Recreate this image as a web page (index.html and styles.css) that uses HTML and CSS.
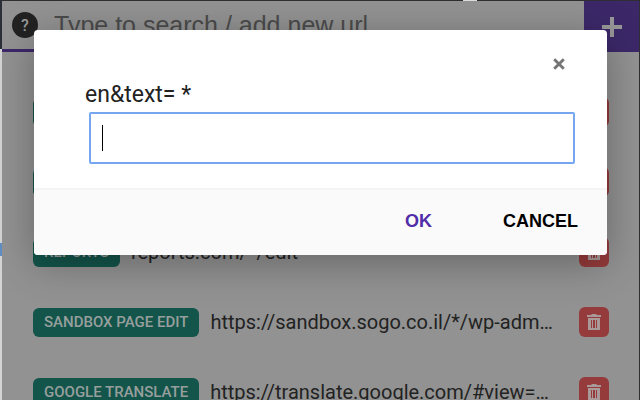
FILE: index.html
```html
<!DOCTYPE html>
<html lang="en">
<head>
<meta charset="utf-8">
<title>Saved urls</title>
<link rel="stylesheet" href="styles.css">
</head>
<body>
<svg class="defs" aria-hidden="true">
  <symbol id="trash" viewBox="0 0 14 18">
    <path fill="currentColor" fill-rule="evenodd" d="M0 2h4l1-1h4l1 1h4v2H0zM1 5h12v12H1zM4 7v8h1V7zM6 7v8h2V7zM9 7v8h1V7z"/>
  </symbol>
</svg>
<div class="edge" aria-hidden="true">
  <i class="edge-dark"></i><i class="edge-light"></i><i class="edge-blue"></i><i class="edge-rest"></i>
</div>
<main class="popup">
  <header class="bar">
    <div class="search">
      <button class="help" aria-label="Help">?</button>
      <input class="query" type="text" aria-label="Search or add url" placeholder="Type to search / add new url">
    </div>
    <button class="add" aria-label="Add">
      <svg class="plus" viewBox="0 0 20 20"><path d="M10 0v20M0 10h20" stroke="currentColor" stroke-width="4"/></svg>
    </button>
  </header>
  <ul class="list">
    <li class="row"><span class="tag"></span><a class="url" href="#"></a><button class="del" aria-label="Delete"><svg class="bin"><use href="#trash"/></svg></button></li>
    <li class="row"><span class="tag"></span><a class="url" href="#"></a><button class="del" aria-label="Delete"><svg class="bin"><use href="#trash"/></svg></button></li>
    <li class="row"><span class="tag">REPORTS</span><a class="url" href="#">reports.com/*/edit</a><button class="del" aria-label="Delete"><svg class="bin"><use href="#trash"/></svg></button></li>
    <li class="row"><span class="tag">SANDBOX PAGE EDIT</span><a class="url" href="#">https://sandbox.sogo.co.il/*/wp-adm…</a><button class="del" aria-label="Delete"><svg class="bin"><use href="#trash"/></svg></button></li>
    <li class="row"><span class="tag">GOOGLE TRANSLATE</span><a class="url" href="#">https://translate.google.com/#view=…</a><button class="del" aria-label="Delete"><svg class="bin"><use href="#trash"/></svg></button></li>
  </ul>
</main>
<form class="dialog" role="dialog">
  <div class="content">
    <button class="close" type="button" aria-label="Close"><svg class="cross" viewBox="0 0 10 10"><path d="M1 1l8 8M9 1l-8 8" stroke="currentColor" stroke-width="2.4"/></svg></button>
    <label class="label" for="value">en&amp;text= *</label>
    <div class="field">
      <input class="value" id="value" type="text">
      <i class="caret"></i>
    </div>
  </div>
  <footer class="actions">
    <button class="action ok" type="button">OK</button>
    <button class="action" type="button">CANCEL</button>
  </footer>
</form>
</body>
</html>
```
FILE: styles.css
```css
* { box-sizing: border-box; }
html, body { height: 100%; }
body {
  margin: 0;
  display: flex;
  overflow: hidden;
  position: relative;
  background: #2e2e33;
  font-family: Roboto, "Liberation Sans", sans-serif;
}
body::before {
  content: "";
  position: absolute;
  top: 0;
  right: 163px;
  width: 14px;
  height: 1px;
  background: #ddd;
}
button { border: 0; padding: 0; font: inherit; cursor: pointer; }
.defs { position: absolute; width: 0; height: 0; }

.edge { width: 2px; flex: none; display: flex; flex-direction: column; }
.edge-dark { flex: none; height: 49px; background: #2b3036; }
.edge-light { flex: none; height: 194px; background: #d2d4d5; }
.edge-blue { flex: none; height: 13px; background: #5f8fc4; }
.edge-rest { flex: 1; background: #d2d4d5; }

.popup {
  flex: 1;
  min-width: 0;
  margin: 1px 1px 0 0;
  background: #929292;
  overflow: hidden;
}
.bar { display: flex; height: 51px; }
.search {
  flex: 1;
  min-width: 0;
  display: flex;
  align-items: center;
  gap: 16px;
  padding-left: 10px;
  border-bottom: 3px solid #3c2869;
}
.help {
  flex: none;
  width: 26px;
  height: 26px;
  border-radius: 50%;
  background: #222;
  color: #999;
  font-size: 16px;
  font-weight: 500;
}
.query {
  flex: 1;
  min-width: 0;
  border: 0;
  padding: 0;
  outline: 0;
  background: none;
  font: 25px "Liberation Sans", sans-serif;
}
.query::placeholder { color: #4b4b4b; opacity: 1; }
.add {
  width: 55px;
  display: grid;
  place-items: center;
  background: #3c2869;
  color: #989898;
}
.plus { width: 20px; height: 20px; }

.list {
  list-style: none;
  margin: 0;
  padding: 45px 30px 0 31px;
  display: grid;
  gap: 40px;
}
.row { display: flex; align-items: center; height: 30px; min-width: 0; }
.tag {
  flex: none;
  min-width: 60px;
  height: 29px;
  padding: 0 11px;
  border-radius: 6px;
  background: #13554b;
  color: #979f9d;
  font-size: 15px;
  font-weight: 500;
  line-height: 29px;
}
.url {
  flex: 1;
  min-width: 0;
  margin: 0 16px 0 11px;
  overflow: hidden;
  white-space: nowrap;
  text-overflow: ellipsis;
  color: #222;
  font-size: 20px;
  line-height: 30px;
  text-decoration: none;
}
.del {
  flex: none;
  width: 30px;
  height: 30px;
  display: grid;
  place-items: center;
  border-radius: 6px;
  background: #953b3b;
  color: #a99;
}
.bin { width: 14px; height: 18px; }

.dialog {
  position: absolute;
  top: 30px;
  left: 34px;
  right: 33px;
  border-radius: 4px;
  overflow: hidden;
  background: #fff;
  box-shadow: 0 8px 40px rgba(0, 0, 0, .3);
}
.content {
  display: flex;
  flex-direction: column;
  padding: 24px 32px 24px 51px;
}
.close {
  align-self: flex-end;
  width: 20px;
  height: 20px;
  margin-right: 6px;
  display: grid;
  place-items: center;
  background: none;
  color: #757575;
}
.cross { width: 12px; height: 12px; }
.label { margin-top: 7px; font-size: 23px; line-height: 28px; color: #222; }
.field { position: relative; margin: 3px 0 0 4px; }
.value {
  display: block;
  width: 100%;
  height: 52px;
  padding: 0 12px;
  border: 2px solid #76a6f0;
  border-radius: 2px;
  outline: 0;
  font: 22px Roboto, sans-serif;
}
.caret {
  position: absolute;
  left: 13px;
  top: 13px;
  bottom: 13px;
  width: 1px;
  background: #000;
}
.actions {
  display: flex;
  justify-content: flex-end;
  gap: 71px;
  height: 67px;
  padding: 0 29px 3px 0;
  border-top: 2px solid #f4f4f4;
  background: #fafafa;
}
.action {
  background: none;
  color: #000;
  font: bold 18px "Liberation Sans", sans-serif;
}
.ok { color: #512da8; }
```
